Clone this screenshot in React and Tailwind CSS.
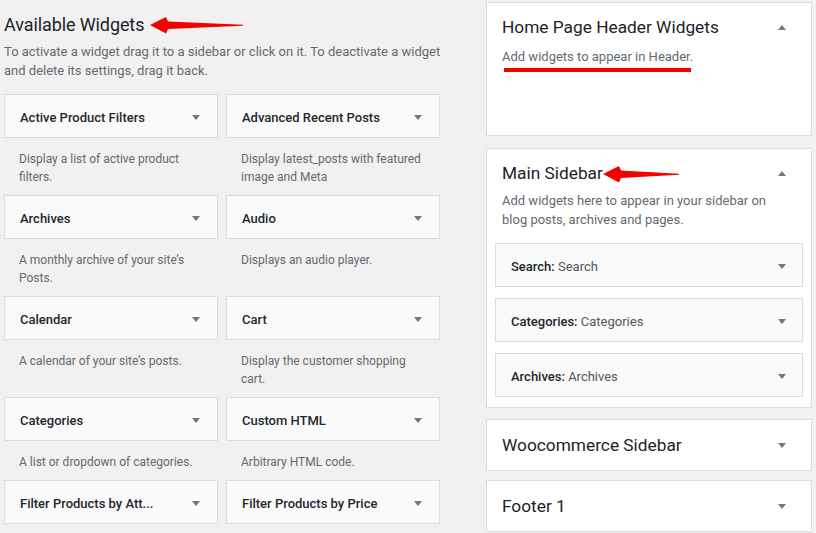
import React from 'react';

const FONT = { fontFamily: 'Roboto, "Noto Sans", sans-serif' };

const widgets = [
  ['Active Product Filters', 'Display a list of active product filters.'],
  ['Advanced Recent Posts', 'Display latest_posts with featured image and Meta'],
  ['Archives', 'A monthly archive of your site’s Posts.'],
  ['Audio', 'Displays an audio player.'],
  ['Calendar', 'A calendar of your site’s posts.'],
  ['Cart', 'Display the customer shopping cart.'],
  ['Categories', 'A list or dropdown of categories.'],
  ['Custom HTML', 'Arbitrary HTML code.'],
  ['Filter Products by Att...', ''],
  ['Filter Products by Price', ''],
];

// small WP-style caret
const Caret = ({ up }) => (
  <svg width="8" height="5" viewBox="0 0 8 5" className="shrink-0">
    <polygon points={up ? '0,5 8,5 4,0' : '0,0 8,0 4,5'} fill="#72777c" />
  </svg>
);

// red annotation arrow pointing left
const RedArrow = ({ className, width }) => (
  <svg className={className} width={width} height="17" viewBox={`0 0 ${width} 17`}>
    <polygon
      points={`0,8 16,0 18,4.5 ${width},7.8 ${width},8.8 18,12 16,16.5`}
      fill="#f50000"
    />
  </svg>
);

const Widget = ({ title, desc }) => (
  <div>
    <div className="h-[44px] bg-[#fafafa] border border-[#dcdcde] flex items-center justify-between pl-[15px] pr-[17px] pt-[3px]">
      <span className="text-[13px] font-medium text-[#23282d]">{title}</span>
      <Caret />
    </div>
    {desc && (
      <p className="text-[12px] leading-[18px] text-[#646970] pl-[15px] pr-[14px] pt-[12px] pb-[9px]">
        {desc}
      </p>
    )}
  </div>
);

const SidebarWidget = ({ label, name }) => (
  <div className="h-[44px] bg-[#fafafa] border border-[#dcdcde] flex items-center justify-between pl-[15px] pr-[16px] pt-[3px]">
    <span className="text-[13px] text-[#23282d]">
      <span className="font-medium">{label}:</span>{' '}
      <span className="text-[#50575e]">{name}</span>
    </span>
    <Caret />
  </div>
);

const Panel = ({ title, up, children, className = '' }) => (
  <div className={`bg-white border border-[#dcdcde] ${className}`}>
    <div className="flex items-center justify-between pl-[15px] pr-[25px]">
      <h3 className="text-[17.3px] leading-[24px] font-normal text-[#1d2327]">{title}</h3>
      <Caret up={up} />
    </div>
    {children}
  </div>
);

export default function App() {
  return (
    <div className="w-[816px] h-[533px] bg-[#f1f1f1] overflow-hidden flex" style={FONT}>
      {/* Available widgets */}
      <div className="w-[440px] ml-[4px] pt-[12px] relative">
        <h2 className="text-[18px] leading-[26px] tracking-[-0.1px] font-normal text-[#1d2327]">
          Available Widgets
        </h2>
        <RedArrow className="absolute left-[146px] top-[17px]" width={93} />
        <p className="w-[446px] text-[13px] leading-[19px] text-[#646970] mt-[4px]">
          To activate a widget drag it to a sidebar or click on it. To deactivate a widget
          and delete its settings, drag it back.
        </p>
        <div className="grid grid-cols-2 gap-x-[8px] mt-[14px] w-[436px]">
          {widgets.map(([t, d]) => (
            <Widget key={t} title={t} desc={d} />
          ))}
        </div>
      </div>

      {/* Sidebars */}
      <div className="w-[326px] ml-[42px] pt-[2px] flex flex-col">
        <Panel title="Home Page Header Widgets" up className="h-[134px] pt-[12px] relative">
          <p className="text-[13px] leading-[18px] text-[#646970] px-[15px] mt-[9px]">
            Add widgets to appear in Header.
          </p>
          <div className="absolute left-[17px] top-[65px] w-[187px] h-[4px] bg-[#f50000]" />
        </Panel>

        <Panel title="Main Sidebar" up className="mt-[12px] pt-[12px] pb-[10px] relative">
          <RedArrow className="absolute left-[116px] top-[17px]" width={76} />
          <p className="text-[13px] leading-[19px] text-[#646970] pl-[15px] pr-[30px] mt-[6px]">
            Add widgets here to appear in your sidebar on blog posts, archives and pages.
          </p>
          <div className="px-[8px] mt-[14px] flex flex-col gap-[11px]">
            <SidebarWidget label="Search" name="Search" />
            <SidebarWidget label="Categories" name="Categories" />
            <SidebarWidget label="Archives" name="Archives" />
          </div>
        </Panel>

        <Panel title="Woocommerce Sidebar" className="mt-[11px] h-[52px] flex flex-col justify-center" />
        <Panel title="Footer 1" className="mt-[9px] h-[52px] flex flex-col justify-center" />
      </div>
    </div>
  );
}
